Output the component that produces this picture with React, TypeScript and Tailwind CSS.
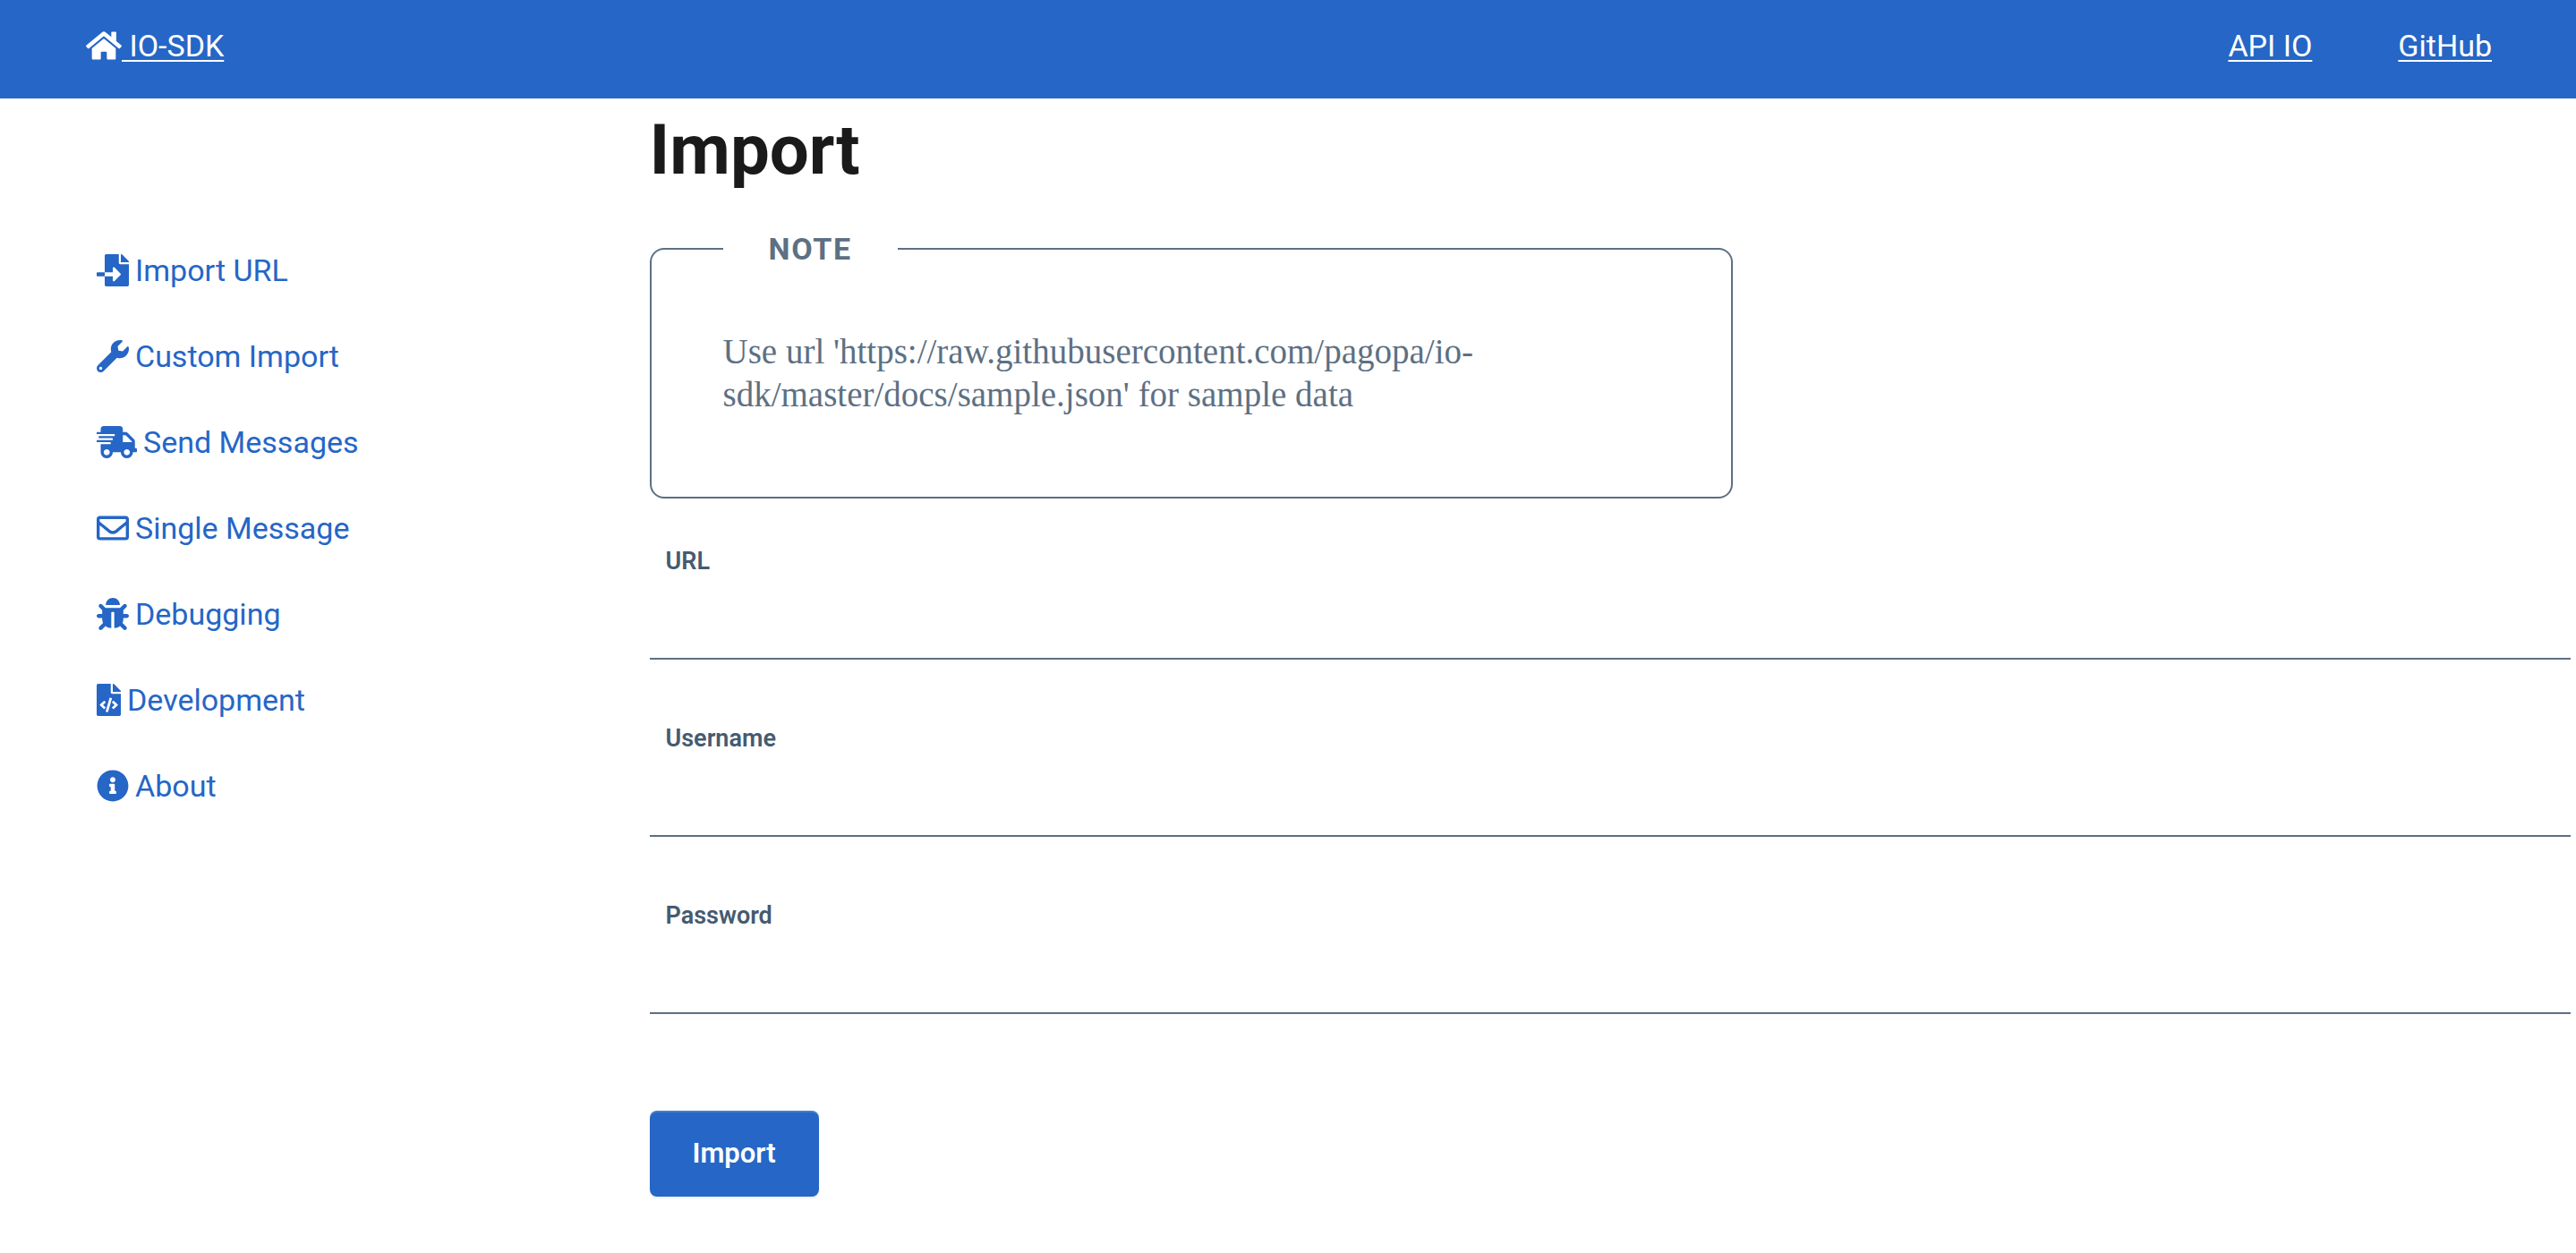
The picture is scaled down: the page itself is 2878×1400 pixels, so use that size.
import type { IconType } from "react-icons";
import {
  FaBug,
  FaFileCode,
  FaFileImport,
  FaHome,
  FaInfoCircle,
  FaRegEnvelope,
  FaShippingFast,
  FaWrench,
} from "react-icons/fa";

const menu: { label: string; icon: IconType; size: string }[] = [
  { label: "Import URL", icon: FaFileImport, size: "h-9 w-9" },
  { label: "Custom Import", icon: FaWrench, size: "h-9 w-9" },
  { label: "Send Messages", icon: FaShippingFast, size: "h-9 w-[45px]" },
  { label: "Single Message", icon: FaRegEnvelope, size: "h-9 w-9" },
  { label: "Debugging", icon: FaBug, size: "h-9 w-9" },
  { label: "Development", icon: FaFileCode, size: "h-9 w-[27px]" },
  { label: "About", icon: FaInfoCircle, size: "h-9 w-9" },
];

const fields = [
  { id: "url", label: "URL", type: "text" },
  { id: "username", label: "Username", type: "text" },
  { id: "password", label: "Password", type: "password" },
];

function Header() {
  return (
    <header className="flex h-[110px] items-center justify-between bg-[#2566c6] px-12 pb-2 text-[34px] text-white">
      <a href="#home" className="flex items-center px-12">
        <FaHome className="h-9 w-10" />
        <span className="whitespace-pre underline decoration-2 underline-offset-4"> IO-SDK</span>
      </a>
      <nav className="flex">
        <a href="#api" className="px-12 underline decoration-2 underline-offset-4">API IO</a>
        <a href="#github" className="pr-[46px] pl-12 underline decoration-2 underline-offset-4">GitHub</a>
      </nav>
    </header>
  );
}

function Sidebar() {
  return (
    <nav className="pt-36 pl-[108px]">
      <ul>
        {menu.map(({ label, icon: Icon, size }) => (
          <li key={label}>
            <a href="#" className="flex h-24 items-center gap-[7px] text-[34px] text-[#2566c6]">
              <Icon className={size} />
              {label}
            </a>
          </li>
        ))}
      </ul>
    </nav>
  );
}

function Note() {
  return (
    <section className="relative max-w-[1210px] rounded-2xl border-2 border-[#5d7083] px-20 py-[90px] text-[#5d7083]">
      <h2 className="absolute -top-[25px] left-20 bg-white px-[51px] text-[34px] leading-[48px] font-bold tracking-wider">
        NOTE
      </h2>
      <p className="max-w-[920px] font-['Liberation_Serif',serif] text-[39px] leading-[48px]">
        Use url 'https://raw.githubusercontent.com/pagopa/io-sdk/master/docs/sample.json' for sample data
      </p>
    </section>
  );
}

export default function App() {
  return (
    <div className="min-h-screen bg-white font-['Roboto',sans-serif]">
      <Header />
      <div className="grid grid-cols-[1fr_3fr]">
        <Sidebar />
        <main className="px-1.5">
          <h1 className="pt-2.5 pb-[61px] text-[78px] leading-24 font-bold text-[#1a1a1a]">Import</h1>
          <Note />
          <form className="pt-[50px]" onSubmit={(e) => e.preventDefault()}>
            {fields.map((f) => (
              <div key={f.id} className="mb-[68px]">
                <label htmlFor={f.id} className="block px-[18px] text-[27px] leading-10 font-semibold text-[#455b71]">
                  {f.label}
                </label>
                <input
                  id={f.id}
                  type={f.type}
                  className="block h-[90px] w-full border-b-2 border-[#5d7083] bg-white px-4 text-[32px] outline-none"
                />
              </div>
            ))}
            <button
              type="submit"
              className="mt-10 h-24 rounded-lg bg-[#2566c6] px-12 text-[31px] font-semibold text-white shadow-[inset_0_2px_0_rgba(255,255,255,0.15),0_2px_2px_rgba(0,0,0,0.075)]"
            >
              Import
            </button>
          </form>
        </main>
      </div>
    </div>
  );
}
